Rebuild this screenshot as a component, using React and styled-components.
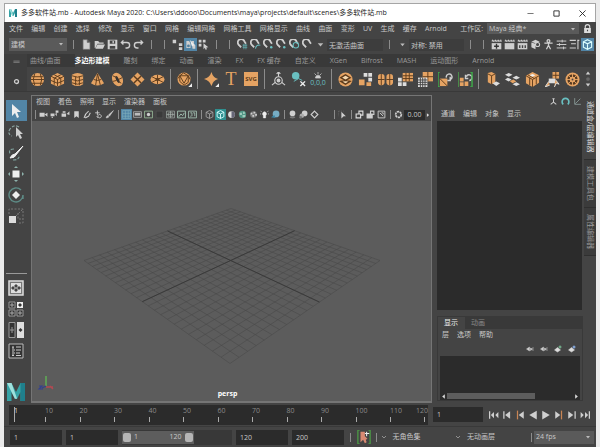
import React from 'react'
import styled, { createGlobalStyle, css } from 'styled-components'

const menus = ['文件', '编辑', '创建', '选择', '修改', '显示', '窗口', '网格', '编辑网格', '网格工具', '网格显示', '曲线', '曲面', '变形', 'UV', '生成', '缓存', 'Arnold']
const shelfTabs = ['曲线/曲面', '多边形建模', '雕刻', '绑定', '动画', '渲染', 'FX', 'FX 缓存', '自定义', 'XGen', 'Bifrost', 'MASH', '运动图形', 'Arnold']
const frames = [10, 20, 30, 40, 50, 60, 70, 80, 90, 100, 110, 120]

const statusLeft = ['|', 'file', 'folder', 'save', 'undo', 'redo', '|', '|', 'hierarchy', '*objects', 'components', '|', '|', 'magnetGrid', 'magnetCurve', 'magnetPoint', 'magnetPoint', 'magnetLive', 'magnet', 'caret']
const statusRight = ['|', '|', 'clapEye', 'clap', 'clapIpr', 'renderSet', 'figure', 'sliders', 'list', '*cube']
const shelfItems = ['sphere', 'cubeO', 'cylinder', 'cone', 'torus', 'plane', 'disc', '|', 'platonic', '|', 'star', 'type', 'svg', '|', 'pivot', 'clearHistory', 'zero', '|', 'combine', 'separate', 'mirror', 'smooth', 'reduce', 'bracketA', 'bracketB', '|', 'extrude', 'bridge', 'bevel', 'multicut', 'wheel']
const viewIcons = ['|', 'camera', 'cameraLock', 'cameraSet', 'bookmark', 'pencilArc', 'panZoom', 'brush', '|', '*grid', 'filmGate', 'resGate', 'dimGate', 'frameCross', 'frameImg', 'frameText', '|', 'wireCube', '!cube', 'shadeBall', 'texBall', 'texGrey', 'light', 'shadow', '|', 'ball', 'balls', 'diamond', 'blank', '|', 'isolate', '|', 'copyA', 'copyB', 'noImage', '|', 'exposure']
const playback = ['first', 'prevFrame', 'prevKey', 'back', 'play', 'nextKey', 'nextFrame', 'last']

const O = '#e5a363'
const D = '#5e3c1c'
const W = '#cfcfcf'
const T = '#69bfc0'

const Clap = ({ children }) => (
  <g>
    <rect x="1" y="6" width="14" height="9" fill={W} />
    <path d="M1 3h14M2 1l2 3M6 1l2 3M10 1l2 3M14 1l1 3" stroke={W} strokeWidth="1.6" />
    {children}
  </g>
)

const Magnet = ({ children }) => (
  <g>
    <path d="M3 9A5 5 0 1 1 11 4L13 7M3 9L6 12" fill="none" stroke={W} strokeWidth="2.6" />
    {children}
  </g>
)

const Tri = ({ d, x }) => (
  <g fill={W}>
    <path d={d} />
    {x.map(v => <rect key={v} x={v} y="2" width="2" height="12" />)}
  </g>
)

const drawings = {
  blank: null,
  file: <path d="M3 1h6l4 4v10H3zM9 1v4h4" fill={W} stroke="#777" />,
  folder: <path d="M1 3h5l2 2h6v2H5l-3 6H1zM5 8h11l-3 6H2z" fill={W} />,
  save: <path fillRule="evenodd" d="M1 1h14v14H1zM4 2v5h8V2zM4 10v4h8v-4zM8 3h2v3H8z" fill={W} />,
  undo: <path d="M5 2L2 5l3 3M2 5h8a4 4 0 0 1 0 8H8" fill="none" stroke={W} strokeWidth="2" />,
  redo: <path d="M11 2l3 3-3 3M14 5H6a4 4 0 0 0 0 8h2" fill="none" stroke={W} strokeWidth="2" />,
  hierarchy: <path d="M1 1h5v5H1zM10 6h5v4h-5zM10 12h5v4h-5z" fill={W} />,
  objects: <g><path d="M2 3h4l2 4v6H2zM9 3h4v4l2 2v5h-4z" fill={W} /><circle cx="5" cy="10" r="2" fill="#4f7f9e" /><path d="M7 1l7 8-4 1z" fill="#eee" /></g>,
  components: <g fill={W}><path d="M1 1h4v4H1zM7 1h4v4H7zM1 7h4v4H1z" /><path d="M8 6l7 6-3 .5 1 2.500-2 .8-1-3-2 2z" /></g>,
  magnet: <Magnet />,
  magnetGrid: <Magnet><path d="M8 9h7M8 12h7M10 7v8M13 7v8" stroke={T} /></Magnet>,
  magnetCurve: <Magnet><path d="M8 14q1-6 7-5" stroke={T} fill="none" strokeWidth="1.500" /></Magnet>,
  magnetPoint: <Magnet><circle cx="12" cy="12" r="1.800" fill={T} /></Magnet>,
  magnetLive: <Magnet><circle cx="10" cy="9" r="4" fill="none" stroke={T} strokeWidth="1.500" /></Magnet>,
  caret: <path d="M4 6h8l-4 5z" fill="#bbb" />,
  chevron: <path d="M4 6l4 4 4-4" fill="none" stroke="#aaa" strokeWidth="1.500" />,
  clap: <Clap />,
  clapEye: <Clap><path d="M8 7v7M4.500 10.500h7" stroke="#333" strokeWidth="2" /></Clap>,
  clapIpr: <Clap><path d="M3 9h2v4H3zM7 9h2v4H7zM11 9h2v4h-2z" fill="#444" /></Clap>,
  renderSet: <g><path d="M2 4l6-3 6 3-6 2zM2 5v7l6 3V7z" fill={W} /><circle cx="11" cy="8" r="3" fill="none" stroke={W} strokeWidth="1.500" /></g>,
  figure: <path d="M8 1a2 2 0 1 1-.1 0M2 6h12M8 5v5M8 9l-3 6M8 9l3 6" fill="none" stroke={W} strokeWidth="1.800" />,
  sliders: <path d="M1 3h14M1 8h14M1 13h14M9 1v4M5 6v4M11 11v4" stroke={W} strokeWidth="1.400" />,
  list: <path d="M1 2h9M3 7h7M1 13h9M13 1v14M12 2h3" stroke={W} strokeWidth="1.600" />,
  cube: <path d="M8 1l6 3v8l-6 3-6-3V4zM2 4l6 3 6-3M8 7v8" fill="none" stroke="#dff" strokeWidth="1.600" />,
  sphere: <g><circle cx="8" cy="8" r="7" fill={O} /><path d="M2 5h12M1 8h14M2 12h12M5 2q-3 6 0 12M11 2q3 6 0 12" stroke={D} fill="none" /></g>,
  cubeO: <g><path d="M8 1l7 3.500v8L8 15.500l-7-3v-8z" fill={O} /><path d="M1 4.500l7 3.500 7-3.500M8 8v7M4.500 3l7 3.500v7M11.500 3l-7 3.500v7M1 9l7 3 7-3" stroke={D} fill="none" /></g>,
  cylinder: <g><path d="M2 3q6-4 12 0v10q-6 4-12 0z" fill={O} /><path d="M2 4q6 3 12 0M2 8q6 3 12 0M2 11.500q6 3 12 0M6 5v9M10 5v9" stroke={D} fill="none" /></g>,
  cone: <g><path d="M8 1l7 11q-7 5-14 0z" fill={O} /><path d="M8 2L6 14M8 2l3 12M4 8q4 2 8 0" stroke={D} fill="none" /></g>,
  torus: <g><ellipse cx="8" cy="8" rx="5.500" ry="7.500" transform="rotate(-25 8 8)" fill={O} /><ellipse cx="8" cy="8" rx="1.500" ry="4" transform="rotate(-25 8 8)" fill="#333" /><path d="M3 4l4 2M3 10l4-1M13 6l-4 2M12 12l-3-2" stroke={D} /></g>,
  plane: <g><path d="M8 .500L15.500 8 8 15.500.500 8z" fill={O} /><path d="M4.200 4.200l7.600 7.600M11.800 4.200l-7.600 7.600" stroke={D} strokeWidth="1.500" /></g>,
  disc: <g><ellipse cx="8" cy="8" rx="7.500" ry="5" fill={O} /><path d="M2 5l12 6M14 5L2 11M8 3v10" stroke={D} /><ellipse cx="8" cy="8" rx="2" ry="1.500" fill={D} /></g>,
  platonic: <g><circle cx="7.500" cy="7.500" r="7" fill={O} /><path d="M3 4h9l-4.500 8zM1 7l2-3 4-3 5 3 2 4M3 4v6l4.500 4L12 11V4" stroke={D} fill="none" /><path d="M16 12v4h-4z" fill="#eee" /></g>,
  star: <g><path d="M8 0q1.500 6 7 7.500Q9.500 9 8 15 6 9 0 7.500 6 6 8 0z" fill={O} /><path d="M16 12v4h-4z" fill="#eee" /></g>,
  pivot: <g fill="none" stroke={W} strokeWidth="1.200"><circle cx="8" cy="9" r="4" /><circle cx="8" cy="9" r="1.500" fill={W} /><path d="M8 0v5M1 14l3.500-3M15 14l-3.500-3M6 2l2-2 2 2" /></g>,
  clearHistory: <g><circle cx="5" cy="4" r="4" fill={T} /><path d="M3 10l5-3 4 2" stroke={T} fill="none" /><path d="M10 10l5 5M15 10l-5 5" stroke="#eee" strokeWidth="1.500" /></g>,
  combine: <g><circle cx="8" cy="8" r="7.500" fill={O} /><path d="M3 6l5-3 5 3-5 3zM3 10l5 3 5-3-5-1z" fill="#f7d9b0" stroke={D} strokeWidth="1.400" /></g>,
  separate: <g><path d="M6 1h4v4H6zM11 1h4v4h-4zM11 6h4v4h-4z" fill="#ddd" /><path d="M1 8h6v6H1zM9 11h5v4H9z" fill={O} /></g>,
  mirror: <g><rect x="0" y="2" width="7" height="12" rx="3" fill={O} /><rect x="9" y="2" width="7" height="12" rx="3" fill={O} /><path d="M3.500 2v12M0 8h7M12.500 2v12M9 8h7" stroke={D} /></g>,
  smooth: <g><path d="M5 1h11v9H5z" fill={O} /><path d="M5 4h11M5 7h11M8.500 1v9M12 1v9" stroke={D} /><path d="M0 6h4v4H0zM0 11h4v4H0zM5 11h4v4H5z" fill="#ddd" /></g>,
  reduce: <g><path d="M5 0h11v10H5z" fill={O} /><path d="M5 5h11M10.500 0v10" stroke={D} /><path d="M0 6h10v10H0z" fill="#ddd" /><path d="M0 8.500h10M0 11h10M0 13.500h10M2.500 6v10M5 6v10M7.500 6v10" stroke="#444" /></g>,
  bracketA: <g><path d="M2 0H0v16h2" fill="none" stroke="#3fae49" strokeWidth="1.500" /><path d="M2 7h8v8H2z" fill={O} /><path d="M2 7l8 8" stroke={D} /><path d="M9 6a3 3 0 1 1 4 2M13 5v4h-3" fill="none" stroke={W} strokeWidth="1.500" /></g>,
  bracketB: <g><path d="M2 6h4v4H2zM7 10h4v5H7zM2 11h4v4H2z" fill={O} /><path d="M9 5a3 3 0 1 1 3 4M8 3v4h3" fill="none" stroke={W} strokeWidth="1.500" /><path d="M-1 -1v18" stroke="#4fd84f" strokeWidth="3" /><path d="M13 0h2v16h-2" fill="none" stroke="#3fae49" strokeWidth="1.500" /></g>,
  extrude: <g><path d="M3 1l4-1 4 2v9l-4 2-4-2z" fill={O} /><path d="M3 2l4 2 4-2M7 4v9" stroke={D} fill="none" /><path d="M8 12l4-2 4 2-4 3z" fill="#ddd" /></g>,
  bridge: <g fill="#ddd"><path d="M0 3l4-2 4 2-4 2zM8 6l4-2 4 2-4 2zM8 13l4-2 4 2-4 2zM0 8l3-2 4 2-3 2z" /><path d="M5 9.500l4-1.500 3 2-4 2z" fill={O} /></g>,
  bevel: <g><path d="M8 0l7 3.500v8L8 16l-7-4v-8z" fill={O} /><path d="M1 4l7 4 7-4M8 8v8M3 3l7 4M5 6v8M12 6v7" stroke={D} fill="none" /><path d="M8 2l3 1.500-3 1.500-3-1.500z" fill="#eee" /></g>,
  multicut: <g><path d="M8 0h7v7H8z" fill={O} /><path d="M4 7h7v5H4z" fill="#ddd" /><path d="M11 8l4 5-3-1-2 4M4 10l-4 6 5-2" fill={O} stroke="#ddd" /><path d="M8 3.500h7M11.500 0v7" stroke={D} /></g>,
  wheel: <g><circle cx="8" cy="8" r="6.500" fill="#573a20" stroke={O} strokeWidth="2" /><circle cx="8" cy="8" r="3" fill={O} /><path d="M8 1v14M1 8h14M3 3l10 10M13 3L3 13" stroke={O} /><circle cx="8" cy="8" r="1" fill="#444" /></g>,
  camera: <path d="M1 5h9v7H1zM10 8l5-3v7z" fill={W} />,
  cameraLock: <path d="M1 6h7v5H1zM9 7l3-2v6zM10 1h5v4h-5zM3 12h2v2H3z" fill={W} />,
  cameraSet: <path d="M3 2h5v3H3zM1 6h8v6H1zM10 7l5-5v7z" fill={W} />,
  bookmark: <path d="M4 2h8v12l-4-3-4 3z" fill={W} />,
  pencilArc: <path d="M2 14q2-8 8-12M4 14l6-3 3-6" stroke={W} fill="none" strokeWidth="2" />,
  panZoom: <path d="M6 1v8M2 5h8M10 8a3 3 0 1 1-.1 0M5 11l2 3" stroke={W} fill="none" strokeWidth="1.600" />,
  brush: <path d="M15 1L6 9l2 2zM5 10q-2 0-3 4 4 0 5-2z" fill={W} stroke={W} />,
  grid: <path d="M1 1h14v14H1zM1 6h14M1 11h14M6 1v14M11 1v14" fill="none" stroke="#83b2bd" />,
  filmGate: <g><path d="M1 3h14v10H1z" fill="none" stroke="#aaa" strokeWidth="1.500" /><path d="M3 5h10v5H3z" fill="#bbb" /></g>,
  resGate: <g><path d="M1 2h14v12H1z" fill="none" stroke="#9b9" strokeWidth="1.500" /><circle cx="8" cy="8" r="3" fill={W} /></g>,
  dimGate: <path d="M2 2h12v12H2z" fill="#3a3a3a" stroke="#5a5a5a" />,
  frameCross: <path d="M1 2h14v12H1zM8 2v12M1 8h14M4 5h8v6H4z" fill="none" stroke="#aab5ae" strokeWidth="1.200" />,
  frameImg: <path d="M1 2h14v12H1zM3 12l4-5 3 3 3-5" fill="none" stroke="#a5c4b4" strokeWidth="1.600" />,
  frameText: <path d="M1 2h14v12H1zM4 5h3v6M9 5h3v6M4 11h2" fill="none" stroke="#a5c4b4" strokeWidth="1.500" />,
  wireCube: <path d="M8 1l6 3v8l-6 3-6-3V4zM2 4l6 3 6-3M8 7v8" fill="none" stroke="#aaa" strokeWidth="1.400" />,
  shadeBall: <g><circle cx="8" cy="8" r="6" fill="#ddd" /><path d="M8 2a6 6 0 0 1 0 12z" fill="#667" /></g>,
  texBall: <g><circle cx="8" cy="8" r="6.500" fill="#4f9483" /><path d="M3 5h4v4H3zM9 3h3v4H9zM8 9h5v4H8z" fill="#9fc9bb" /></g>,
  texGrey: <g><circle cx="8" cy="8" r="6" fill="#777" /><path d="M3 5h3v3H3zM8 3h3v3H8zM6 9h3v3H6zM11 7h3v3h-3z" fill={W} /></g>,
  light: <path d="M8 3a4 4 0 0 1 2 7v4H6v-4a4 4 0 0 1 2-7zM1 2l2 1M15 2l-2 1M0 7h2M14 7h2" fill="#eee" stroke="#eee" />,
  burst: <path d="M3 14a5 5 0 0 1 10 0zM8 2v5M1 5l4 4M15 5l-4 4" fill={W} stroke={W} strokeWidth="1.500" />,
  shadow: <g><circle cx="9" cy="7" r="6" fill="#77adc4" /><path d="M0 13l6-4 2 5z" fill="#3c89a9" /></g>,
  ball: <g><circle cx="8" cy="6" r="5" fill={W} /><ellipse cx="8" cy="13" rx="5" ry="2" fill="#777" /></g>,
  balls: <g><circle cx="10" cy="6" r="5" fill={W} /><circle cx="5" cy="10" r="4" fill="#aaa" /><circle cx="3" cy="13" r="2.500" fill="#777" /></g>,
  diamond: <path d="M8 2l6 6-6 6-6-6z" fill="none" stroke={W} strokeWidth="2" />,
  isolate: <g><path d="M1 2h9M1 2v9" stroke="#777" strokeDasharray="2 2" /><path d="M6 3l8 8h-4l-4 4z" fill={W} /></g>,
  copyA: <path fillRule="evenodd" d="M6 1h9v9h-4v5H1V6h5zM8 3v3h3v2h2V3zM3 8v5h6V8z" fill="#ddd" />,
  copyB: <path fillRule="evenodd" d="M7 1h8v8h-3v6H1V6h6zM9 3v3h3v1h1V3z" fill={W} />,
  noImage: <path d="M2 2h12v12H2zM5 5l6 6M8 5h3v3" fill="none" stroke={W} strokeWidth="1.600" />,
  exposure: <circle cx="8" cy="8" r="5" fill="none" stroke={W} strokeWidth="3" strokeDasharray="4 1" />,
  select: <path d="M4 1v12l3-3 2 5 2-1-2-5h4z" fill="#eee" />,
  lasso: <g><path d="M11 3Q6 0 2 5q-3 5 2 7" fill="none" stroke="#8aa3a0" strokeWidth="1.200" strokeDasharray="3 1.500" /><path d="M8 3v10l2-2 2 4 2-1-2-4h3z" fill={W} /></g>,
  paint: <g><path d="M6 4Q0 4 2 9M5 15q7 0 6-5" fill="none" stroke="#7fa09c" strokeWidth="1.200" strokeDasharray="3 1.500" /><path d="M15 1L7 9l1 1zM7 9q-3 0-5 4 5 0 6-3z" fill="#eee" stroke="#eee" /></g>,
  move: <g><path d="M4.500 4.500h7v7h-7z" fill="#eee" /><path d="M8 0l2 2H6zM8 16l2-2H6zM0 8l2-2v4zM16 8l-2-2v4z" fill="#8fb3ad" /></g>,
  rotate: <g><path d="M8 4l4 4-4 4-4-4z" fill="#eee" /><path d="M13 3a7 7 0 1 0 2 5M15 8v4" fill="none" stroke="#5e8c87" strokeWidth="1.400" /></g>,
  scale: <g><path d="M1 8h7v7H1z" fill="#ddd" /><path d="M1 6V1h14v14h-5M8 8l7-7M10 5v6h5" fill="none" stroke="#777" strokeDasharray="2 1.500" /></g>,
  single: <g><path d="M1 1h14v14H1z" fill="#777" stroke="#ddd" strokeWidth="1.500" /><path d="M3 3h10v10H3z" fill="#ddd" /><path d="M8 4l2 2-2 2-2-2zM8 8l2 2-2 2-2-2zM5 6l2 2-2 2-2-2zM11 6l2 2-2 2-2-2z" fill="#444" /></g>,
  four: <g><path d="M1 1h6v6H1zM1 9h6v6H1zM9 9h6v6H9z" fill="#333" stroke="#999" /><path d="M9 1h6v6H9z" fill="#eee" /><path d="M4 2v4M2 4h4M4 10v4M2 12h4M12 10v4M10 12h4" stroke="#aaa" /><path d="M12 2l2 2-2 2-2-2z" fill="#333" /></g>,
  two: <g><path d="M1 .5h6v15H1z" fill="#333" stroke="#999" /><path d="M9 0h7v16H9z" fill="#ddd" /><path d="M4 5v6M2 8h4" stroke="#999" /><path d="M12.500 6l2 2-2 2-2-2z" fill="#333" /></g>,
  outliner: <g><path d="M1 1h14v14H1z" fill="#333" stroke="#bbb" /><path d="M4 4h2M8 4h5M6 7h1M8 7h5M6 10h1M8 10h4M4 12.500h2M8 12.500h5M5 4v8" stroke="#ccc" /></g>,
  axes: <path d="M8 2v7l-5 4M8 9l5 4M6 3h4" fill="none" stroke={W} strokeWidth="1.800" />,
  loop: <path d="M4 13a6 6 0 1 1 8 0" fill="none" stroke={T} strokeWidth="3" />,
  graph: <path d="M3 2v11h11M4 12l9-9" fill="none" stroke="#8b9c9a" strokeWidth="1.500" />,
  layerUp: <path d="M1 8l6-4v8zM9 6l4 2-4 3zM14 4v8" fill={W} stroke={W} />,
  layerNew: <g><path d="M1 10l6-5 6 5-6 4z" fill="#ddd" stroke="#ddd" /><path d="M12 1v6M9 4h6" stroke="#7fc79b" strokeWidth="2" /></g>,
  layerSel: <g><path d="M1 10l6-5 6 5-6 4z" fill="#ddd" stroke="#ddd" /><circle cx="12" cy="4" r="3" fill="#7f9fd0" /></g>,
  arrowLeft: <path d="M11 3v10L5 8z" fill="#ddd" />,
  arrowRight: <path d="M5 3v10l6-5z" fill="#ddd" />,
  first: <Tri d="M8 3v10L3 8zM15 3v10l-5-5z" x={[0]} />,
  prevFrame: <Tri d="M13 2v12L5 8z" x={[2]} />,
  prevKey: <g><path d="M14 2v12L6 8z" fill={W} /><path d="M4 1v14" stroke="#c98554" strokeWidth="2" /></g>,
  back: <Tri d="M14 1v14L2 8z" x={[]} />,
  play: <Tri d="M2 1v14l12-7z" x={[]} />,
  nextKey: <g><path d="M2 2v12l8-6z" fill={W} /><path d="M12 1v14" stroke="#c98554" strokeWidth="2" /></g>,
  nextFrame: <Tri d="M2 2v12l8-6z" x={[12]} />,
  last: <Tri d="M1 3v10l5-5zM8 3v10l5-5z" x={[14]} />,
  lock: <path fillRule="evenodd" d="M2 7h1V5a5 5 0 0 1 10 0v2h1v9H2zM5 7h6V5a3 3 0 0 0-6 0zM7 10v3h2v-3z" fill="#ddd" />,
  gear: <circle cx="8" cy="8" r="4.500" fill="none" stroke={W} strokeWidth="3" />,
  dash: <path d="M1 7h14M1 10h14" stroke="#999" strokeWidth="1.500" />,
  up: <path d="M8 4l6 8H2z" fill={W} />,
  down: <path d="M8 12L2 4h12z" fill={W} />,
  dot: <circle cx="8" cy="8" r="5" fill="#666" />,
  min: <path d="M1 8h14" stroke="#333" strokeWidth="1.500" />,
  max: <path d="M2 2h12v12H2z" fill="none" stroke="#222" strokeWidth="2" />,
  close: <path d="M1 1l14 14M15 1L1 15" stroke="#222" strokeWidth="2" />,
  autoKey: <g><path d="M3 0H1v16h2M13 0h2v16h-2" fill="none" stroke="#4c9a45" strokeWidth="1.500" /><path d="M4 2h5v5l3 3-2 1 1 3-2 1-2-4-3 3z" fill="#d98a72" /><path d="M11 2v5M9 4h5" stroke="#eee" strokeWidth="1.200" /></g>,
  logo: <g><path d="M0 0h4l4 8 4-8h4v16h-4V8l-3 6H7L4 8v8H0z" fill="#36a3a6" /><path d="M0 0h4l5 14H7z" fill="#9fe0dc" /><path d="M12 0h4v16h-4z" fill="#1f7f8c" /></g>,
}

const Icon = ({ name, size = 16 }) => (
  <Glyph viewBox="0 0 16 16" $size={size} aria-hidden="true">{drawings[name]}</Glyph>
)

// '|' is a divider, '*' marks a pressed tool and '!' a shaded one
const Tools = ({ items, cell, divider, size }) => items.map((item, i) => {
  if (item === '|') return <Divider key={i} $cell={divider} $tall={size > 12} />
  const state = item[0] === '*' ? 'on' : item[0] === '!' ? 'teal' : undefined
  const name = state ? item.slice(1) : item
  return (
    <Tool key={i} $cell={cell} $state={state} aria-label={name}>
      {name === 'svg' && <Badge>SVG</Badge>}
      {name === 'type' && <BigT>T</BigT>}
      {name === 'zero' && <Zero><Icon name="burst" size={8} />0,0,0</Zero>}
      {drawings[name] && <Icon name={name} size={size} />}
    </Tool>
  )
})

// maps the unit square to the four projected corners of the floor
const project = (u, v) => {
  const [[x0, y0], [x1, y1], [x2, y2], [x3, y3]] = [[199, 87], [348, 139], [198, 242], [52, 139]]
  const dx1 = x1 - x2, dx2 = x3 - x2, sx = x0 - x1 + x2 - x3
  const dy1 = y1 - y2, dy2 = y3 - y2, sy = y0 - y1 + y2 - y3
  const det = dx1 * dy2 - dx2 * dy1
  const g = (sx * dy2 - dx2 * sy) / det
  const h = (dx1 * sy - sx * dy1) / det
  const w = g * u + h * v + 1
  return [
    ((x1 - x0 + g * x1) * u + (x3 - x0 + h * x3) * v + x0) / w,
    ((y1 - y0 + g * y1) * u + (y3 - y0 + h * y3) * v + y0) / w,
  ].map(n => n.toFixed(2)).join(' ')
}

const Floor = () => {
  const steps = Array.from({ length: 25 }, (_, i) => i / 24)
  const lines = steps.map(t => `M${project(t, 0)}L${project(t, 1)}M${project(0, t)}L${project(1, t)}`).join('')
  return (
    <Scene viewBox="0 0 399 279">
      <path d={lines} stroke="#494949" strokeWidth=".6" fill="none" />
      <path d={`M${project(0.5, 0)}L${project(0.5, 1)}M${project(0, 0.5)}L${project(1, 0.5)}`} stroke="#3a3a3a" strokeWidth="1" fill="none" />
    </Scene>
  )
}

const App = () => {
  return (
    <Desktop>
      <Global />
      <Window>

        <TitleBar>
          <Icon name="logo" size={8} />
          <Title>多多软件站.mb - Autodesk Maya 2020: C:\Users\ddooo\Documents\maya\projects\default\scenes\多多软件站.mb</Title>
          <WindowButton aria-label="minimize"><Icon name="min" size={7} /></WindowButton>
          <WindowButton aria-label="maximize"><Icon name="max" size={7} /></WindowButton>
          <WindowButton aria-label="close"><Icon name="close" size={7} /></WindowButton>
        </TitleBar>

        <MenuBar>
          <MenuList>
            {menus.map(m => <MenuItem key={m}>{m}</MenuItem>)}
          </MenuList>
          <Workspace>
            工作区:
            <SelectBox $width={92}>
              <select defaultValue="classic"><option value="classic">Maya 经典*</option></select>
              <Icon name="caret" size={8} />
            </SelectBox>
            <Icon name="lock" size={9} />
          </Workspace>
        </MenuBar>

        <StatusLine>
          <SelectBox $width={58} $tall>
            <select aria-label="mode" defaultValue="model"><option value="model">建模</option></select>
            <Icon name="caret" size={8} />
          </SelectBox>
          <Tools items={statusLeft} cell={13} divider={13} size={11} />
          <StatusField aria-label="live surface" readOnly value="无激活曲面" />
          <Divider $cell={13} />
          <Tool $cell={13} aria-label="symmetry"><Icon name="caret" size={9} /></Tool>
          <StatusField $grow aria-label="symmetry value" readOnly value="对称: 禁用" />
          <Tools items={statusRight} cell={13} divider={13} size={11} />
        </StatusLine>

        <Shelf>
          <ShelfSide>
            <Icon name="dash" size={7} />
            <Icon name="gear" size={7} />
          </ShelfSide>
          <ShelfBody>
            <ShelfTabs>
              {shelfTabs.map(t => <ShelfTab key={t} $active={t === '多边形建模'}>{t}</ShelfTab>)}
            </ShelfTabs>
            <ShelfIcons>
              <Tools items={shelfItems} cell={20} divider={7} size={15} />
              <ShelfScroll>
                <Icon name="up" size={6} />
                <Icon name="dot" size={6} />
                <Icon name="down" size={6} />
              </ShelfScroll>
            </ShelfIcons>
          </ShelfBody>
        </Shelf>

        <Main>
          <ToolBox>
            {['*select', 'lasso', 'paint', 'move', 'rotate', 'scale'].map(n => (
              <BigTool key={n} $on={n[0] === '*'} aria-label={n.replace('*', '')}><Icon name={n.replace('*', '')} size={16} /></BigTool>
            ))}
            <Rule />
            {['single', 'four', 'two', 'outliner'].map(n => (
              <BigTool key={n} aria-label={n}><Icon name={n} size={16} /></BigTool>
            ))}
            <LogoSpot><Icon name="logo" size={18} /></LogoSpot>
          </ToolBox>

          <Viewport>
            <PanelMenu>
              {['视图', '着色', '照明', '显示', '渲染器', '面板'].map(m => <MenuItem key={m}>{m}</MenuItem>)}
            </PanelMenu>
            <PanelTools>
              <Tools items={viewIcons} cell={11} divider={6} size={9} />
              <Exposure aria-label="exposure" defaultValue="0.00" />
              <Icon name="arrowRight" size={6} />
            </PanelTools>
            <Floor />
            <AxisMark viewBox="0 0 18 16" aria-hidden="true">
              <path d="M9 11V1" stroke="#5fae55" strokeWidth="1.500" />
              <path d="M9 12h7M13 11l3 3" stroke="#b04a52" strokeWidth="1.500" />
              <path d="M9 11l-4 2M2 11h3l-3 3h4" stroke="#33408f" strokeWidth="1.200" fill="none" />
            </AxisMark>
            <CameraName>persp</CameraName>
          </Viewport>

          <Side>
            <SideIcons>
              {['axes', 'loop', 'graph'].map(n => <Tool key={n} $cell={12} aria-label={n}><Icon name={n} size={9} /></Tool>)}
            </SideIcons>
            <SideMenu>
              {['通道', '编辑', '对象', '显示'].map(m => <MenuItem key={m}>{m}</MenuItem>)}
            </SideMenu>
            <ChannelBox />
            <Layers>
              <LayerTabs>
                <LayerTab $active>显示</LayerTab>
                <LayerTab>动画</LayerTab>
              </LayerTabs>
              <SideMenu>
                {['层', '选项', '帮助'].map(m => <MenuItem key={m}>{m}</MenuItem>)}
              </SideMenu>
              <LayerIcons>
                {['layerUp', 'layerUp', 'layerNew', 'layerSel'].map((n, i) => <Tool key={i} $cell={14} aria-label={n}><Icon name={n} size={8} /></Tool>)}
              </LayerIcons>
              <LayerList>
                <Scrollbar>
                  <Icon name="arrowLeft" size={7} />
                  <Track><Thumb /></Track>
                  <Icon name="arrowRight" size={7} />
                </Scrollbar>
              </LayerList>
            </Layers>
          </Side>

          <SideTabs>
            <SideTab $active>通道盒/层编辑器</SideTab>
            <SideTab>建模工具包</SideTab>
            <SideTab>属性编辑器</SideTab>
          </SideTabs>
        </Main>

        <TimeRow>
          <Ruler>
            <Tick $current>1</Tick>
            {frames.map(f => <Tick key={f} $last={f === 120}>{f}</Tick>)}
          </Ruler>
          <NumberField $width={50} aria-label="current frame" defaultValue="1" />
          <Playback>
            {playback.map(n => <Tool key={n} $cell={13} aria-label={n}><Icon name={n} size={10} /></Tool>)}
          </Playback>
        </TimeRow>

        <RangeRow>
          <NumberField $width={52} aria-label="start" defaultValue="1" />
          <NumberField $width={52} aria-label="range start" defaultValue="1" />
          <RangeTrack>
            <RangeBar>
              <Handle />
              <span>1</span>
              <RangeEnd>120</RangeEnd>
              <Handle />
            </RangeBar>
          </RangeTrack>
          <NumberField $width={52} aria-label="range end" defaultValue="120" />
          <NumberField $width={52} aria-label="end" defaultValue="200" />
          <RangeTail>
            <Divider $cell={5} />
            <Tool $cell={20} aria-label="auto key"><Icon name="autoKey" size={14} /></Tool>
            <Divider $cell={5} />
            <SetName><Icon name="chevron" size={8} />无角色集</SetName>
            <SetName><Icon name="chevron" size={8} />无动画层</SetName>
            <Divider $cell={5} />
            <SelectBox $width={60} $tall>
              <select aria-label="frame rate" defaultValue="24"><option value="24">24 fps</option></select>
              <Icon name="caret" size={8} />
            </SelectBox>
          </RangeTail>
        </RangeRow>

      </Window>
    </Desktop>
  )
}

export default App

const Global = createGlobalStyle`
  * {
    box-sizing: border-box;
  }
  body {
    margin: 0;
    background: #ebebeb;
  }
  body, button, input, select {
    font: 7px/10px "Open Sans", "Noto Sans CJK SC", sans-serif;
    color: #c8c8c8;
  }
  button, input, select {
    margin: 0;
    padding: 0;
    border: 0;
    background: none;
    outline: 0;
  }
`

const Desktop = styled.div`
  height: 100vh;
  min-height: 400px;
  padding: 3px 4px 0;
  overflow: hidden;
`

const Window = styled.div`
  height: 100%;
  display: flex;
  flex-direction: column;
  background: #444;
  white-space: nowrap;
`

const Glyph = styled.svg`
  display: block;
  flex: none;
  width: ${props => props.$size}px;
  height: ${props => props.$size}px;
`

const TitleBar = styled.header`
  display: flex;
  align-items: center;
  height: 19px;
  padding-left: 4px;
  border: 1px solid #a5a5a5;
  border-bottom: 0;
  background: #fff;
  color: #222;
`

const Title = styled.h1`
  flex: 1;
  margin: 0 0 0 4px;
  font-size: 7px;
  font-weight: 400;
`

const WindowButton = styled.button`
  width: 26px;
  height: 18px;
  display: flex;
  align-items: center;
  justify-content: center;
`

const MenuBar = styled.nav`
  display: flex;
  align-items: center;
  height: 13px;
  padding-left: 5px;
`

const MenuList = styled.div`
  flex: 0 0 438px;
  display: flex;
  justify-content: space-between;
`

const MenuItem = styled.button`
  flex: none;
`

const Workspace = styled.label`
  margin-left: auto;
  padding-right: 4px;
  display: flex;
  align-items: center;
  gap: 4px;
`

const SelectBox = styled.div`
  position: relative;
  flex: none;
  width: ${props => props.$width}px;
  height: ${props => props.$tall ? 13 : 11}px;
  background: #5a5a5a;

  select {
    width: 100%;
    height: 100%;
    padding-left: 2px;
    appearance: none;
  }
  ${Glyph} {
    position: absolute;
    right: 2px;
    top: 2px;
    pointer-events: none;
  }
`

const StatusLine = styled.div`
  display: flex;
  align-items: center;
  height: 19px;
  padding: 0 2px 0 5px;
`

const Tool = styled.button`
  flex: none;
  display: flex;
  align-items: center;
  justify-content: center;
  width: ${props => props.$cell}px;
  height: 100%;

  ${props => props.$state && css`
    height: ${props.$cell}px;
    background: ${props.$state === 'on' ? '#5285a6' : '#2f8f8f'};
  `}
`

const Divider = styled.span`
  flex: none;
  width: ${props => props.$cell}px;
  display: flex;
  justify-content: center;

  &::after {
    content: '';
    width: 1px;
    height: ${props => props.$tall ? 20 : 9}px;
    background: #8c8c8c;
  }
`

const StatusField = styled.input`
  flex: ${props => props.$grow ? '1 1 55px' : '0 0 56px'};
  min-width: 0;
  width: 56px;
  height: 12px;
  padding-left: 2px;
  background: #3d3d3d;
`

const Shelf = styled.div`
  display: flex;
  margin-bottom: 3px;
  border-bottom: 1px solid #393939;
`

const ShelfSide = styled.div`
  width: 23px;
  padding: 4px 2px 6px 4px;
  display: flex;
  flex-direction: column;
  align-items: center;
  justify-content: space-between;
  background: #3e3e3e;
`

const ShelfBody = styled.div`
  flex: 1;
  min-width: 0;
`

const ShelfTabs = styled.div`
  display: flex;
  align-items: center;
  gap: 14px;
  height: 13px;
  padding-left: 3px;
  background: #393939;
`

const ShelfTab = styled.button`
  flex: none;
  height: 13px;
  color: ${props => props.$active ? '#fff' : '#999'};
  background: ${props => props.$active ? '#444' : 'none'};
  font-weight: ${props => props.$active ? 600 : 400};
`

const ShelfIcons = styled.div`
  display: flex;
  align-items: center;
  height: 24px;
`

const Badge = styled.span`
  width: 14px;
  line-height: 14px;
  text-align: center;
  font-size: 6px;
  font-weight: 700;
  background: ${O};
  color: #5e3c1c;
`

const BigT = styled.span`
  font: 400 18px/20px "Liberation Serif", serif;
  color: ${O};
`

const Zero = styled.span`
  display: flex;
  flex-direction: column;
  align-items: center;
  font-size: 7px;
  line-height: 8px;
  color: ${T};
`

const ShelfScroll = styled.div`
  margin-left: auto;
  padding-right: 5px;
`

const Main = styled.main`
  flex: 1;
  min-height: 0;
  display: flex;
`

const ToolBox = styled.aside`
  width: 27px;
  padding: 5px 4px 2px 1px;
  display: flex;
  flex-direction: column;
  align-items: center;
`

const BigTool = styled.button`
  flex: none;
  width: 21px;
  height: 21px;
  display: flex;
  align-items: center;
  justify-content: center;
  background: ${props => props.$on ? '#5285a6' : 'none'};
`

const Rule = styled.hr`
  flex: none;
  width: 21px;
  height: 1px;
  margin: auto 0 3px;
  border: 0;
  background: #999;
`

const LogoSpot = styled.div`
  margin-top: 22px;
`

const Viewport = styled.section`
  position: relative;
  flex: 1;
  min-width: 0;
  display: flex;
  flex-direction: column;
  border: 1px solid #757575;
  border-bottom-width: 2px;
  background: #5c5c5c;
`

const PanelMenu = styled.nav`
  flex: none;
  display: flex;
  align-items: center;
  gap: 8px;
  height: 12px;
  padding-left: 4px;
  background: #444;
`

const PanelTools = styled.div`
  flex: none;
  display: flex;
  align-items: center;
  height: 13px;
  background: #444;
`

const Exposure = styled.input`
  width: 21px;
  height: 10px;
  margin-right: auto;
  text-align: center;
  background: #2b2b2b;
`

const Scene = styled.svg`
  display: block;
  flex: 1;
  min-height: 0;
  width: 100%;
`

const AxisMark = styled.svg`
  position: absolute;
  left: 5px;
  bottom: 10px;
  width: 18px;
  height: 16px;
`

const CameraName = styled.span`
  position: absolute;
  left: 0;
  right: 8px;
  bottom: 2px;
  text-align: center;
  color: #fff;
  font-weight: 700;
`

const Side = styled.aside`
  width: 152px;
  padding: 0 1px 2px 5px;
  display: flex;
  flex-direction: column;
`

const SideIcons = styled.div`
  flex: none;
  display: flex;
  justify-content: flex-end;
  height: 13px;
`

const SideMenu = styled.nav`
  flex: none;
  display: flex;
  align-items: center;
  gap: 8px;
  height: 12px;
  padding-left: 4px;
`

const ChannelBox = styled.div`
  flex: 1;
  margin: 1px 1px 6px 0;
  background: #2b2b2b;
`

const Layers = styled.div`
  flex: none;
  border: 1px solid #393939;
`

const LayerTabs = styled.div`
  display: flex;
  height: 12px;
  background: #393939;
`

const LayerTab = styled.button`
  padding: 0 7px 0 6px;
  color: ${props => props.$active ? '#eee' : '#8a8a8a'};
  background: ${props => props.$active ? '#444' : 'none'};
`

const LayerIcons = styled.div`
  display: flex;
  justify-content: flex-end;
  height: 15px;
  padding-right: 3px;
`

const LayerList = styled.div`
  display: flex;
  align-items: flex-end;
  height: 44px;
  margin: 0 2px;
  background: #2b2b2b;
`

const Scrollbar = styled.div`
  flex: 1;
  display: flex;
  align-items: center;
  height: 8px;
`

const Track = styled.div`
  flex: 1;
`

const Thumb = styled.div`
  width: 70%;
  height: 6px;
  background: #5d5d5d;
`

const SideTabs = styled.div`
  width: 12px;
  display: flex;
  flex-direction: column;
`

const SideTab = styled.button`
  flex: none;
  padding: 6px 0;
  writing-mode: vertical-rl;
  text-orientation: sideways;
  border-bottom: 1px solid #2f2f2f;
  color: ${props => props.$active ? '#ddd' : '#999'};
  background: ${props => props.$active ? '#444' : '#3b3b3b'};
`

const TimeRow = styled.div`
  flex: none;
  display: flex;
  align-items: center;
  height: 24px;
  padding: 0 5px;
  border-bottom: 1px solid #393939;
`

const Ruler = styled.div`
  flex: 1;
  display: grid;
  grid-template-columns: 9fr repeat(11, 10fr) 1fr;
  height: 20px;
  padding: 1px 0 0 5px;
  margin-right: 5px;
  background: #2b2b2b;
`

const Tick = styled.span`
  position: relative;
  min-width: 0;
  justify-self: ${props => props.$last ? 'end' : 'stretch'};
  color: ${props => props.$current ? '#ddd' : '#8a8a8a'};

  &::after {
    content: '';
    position: absolute;
    ${props => props.$last ? 'right: 3px' : 'left: 0'};
    bottom: 3px;
    width: 1px;
    height: ${props => props.$current ? 15 : 5}px;
    background: #aaa;
  }
`

const NumberField = styled.input`
  flex: none;
  width: ${props => props.$width}px;
  height: 15px;
  padding-left: 4px;
  background: #2b2b2b;
`

const Playback = styled.div`
  display: flex;
  padding-left: 4px;
`

const RangeRow = styled.div`
  flex: none;
  display: flex;
  align-items: center;
  gap: 4px;
  height: 20px;
  padding: 0 2px 0 6px;
`

const RangeTrack = styled.div`
  flex: 1;
  height: 15px;
  padding: 1px 0;
  background: #383838;
`

const RangeBar = styled.div`
  width: 65%;
  height: 13px;
  padding: 0 1px;
  display: flex;
  align-items: center;
  gap: 3px;
  background: #5d5d5d;
`

const RangeEnd = styled.span`
  margin-left: auto;
`

const Handle = styled.i`
  width: 8px;
  height: 9px;
  border-radius: 2px;
  background: #b5b5b5;
`

const RangeTail = styled.div`
  flex: none;
  width: 246px;
  display: flex;
  align-items: center;
  justify-content: space-between;
`

const SetName = styled.span`
  width: 74px;
  display: flex;
  align-items: center;
  gap: 5px;
`
